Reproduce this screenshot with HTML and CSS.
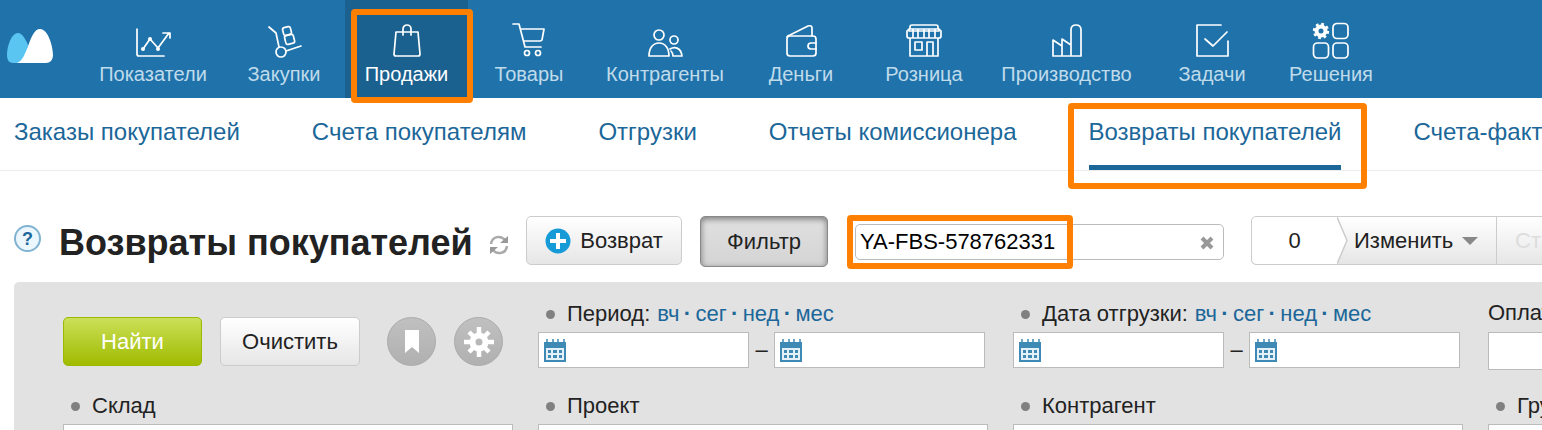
FILE: index.html
```html
<!DOCTYPE html>
<html lang="ru">
<head>
<meta charset="utf-8">
<title>Возвраты покупателей</title>
<link rel="stylesheet" href="styles.css">
</head>
<body>
<svg class="sprite" aria-hidden="true">
  <symbol id="calendar" viewBox="0 0 22 23">
    <path fill="#3f89b5" d="M0 3h22v20H0z"/>
    <path fill="#6da5c7" d="M2 0h2v3H2zM8 0h2v3H8zM13 0h2v3h-2zM19 0h2v3h-2z"/>
    <path fill="#e4f1f9" d="M2 9h18v12H2z"/>
    <path fill="#3f89b5" d="M4 11h3v3H4zM9 11h4v3H9zM15 11h3v3h-3zM4 16h3v3H4zM9 16h4v3H9zM15 16h3v3h-3z"/>
  </symbol>
</svg>

<header class="topbar">
  <a class="logo" href="#" aria-label="Главная">
    <svg width="46" height="34" viewBox="0 0 46 34"><path fill="#5bc5f2" d="M6 34C2 34 0 31 0 26C0 16 5 4 11 4C15 4 18 9 21 16L18 34z"/><path fill="#fff" d="M10 34C21 31 22 0 33 0C41 0 46 17 46 26C46 31 43 34 39 34z"/></svg>
  </a>
  <nav class="mainnav">
    <a class="nav-item" href="#"><svg class="nav-icon" viewBox="0 0 36 36"><path d="M2 6v25q0 2 2 2h25M8 26l7-10 8 9L34 10M28 10h7v5"/><circle class="solid" cx="8" cy="26" r="2"/><circle class="solid" cx="15" cy="16" r="2"/><circle class="solid" cx="23" cy="26" r="2"/></svg><span>Показатели</span></a>
    <a class="nav-item" href="#"><svg class="nav-icon" viewBox="0 0 36 36"><path d="M3 4l7 6 3 14M20 28l15-5"/><circle cx="15" cy="29" r="5"/><rect x="17" y="4" width="8" height="8" rx="2" transform="rotate(-14 21 8)"/><rect x="19" y="12" width="9" height="9" rx="2" transform="rotate(-14 23 16)"/></svg><span>Закупки</span></a>
    <a class="nav-item active" href="#"><svg class="nav-icon" viewBox="0 0 36 36"><path d="M7 9h22l2 22q0 2-2 2H7q-2 0-2-2zM14 12V6a4 4 0 0 1 8 0v6"/></svg><span>Продажи</span><i class="mark mark-nav"></i></a>
    <a class="nav-item" href="#"><svg class="nav-icon" viewBox="0 0 36 36"><path d="M2 1h6l6 23h16M10 6h23l-2 11q-1 1-2 1H13"/><circle cx="16" cy="30" r="2.5"/><circle cx="27" cy="30" r="2.5"/></svg><span>Товары</span></a>
    <a class="nav-item" href="#"><svg class="nav-icon" viewBox="0 0 36 36"><circle cx="12" cy="12" r="5"/><circle cx="27" cy="17" r="4"/><path d="M2 33c0-8 4-13 10-13s10 5 10 13zM23 26c5-3 11-1 12 7h-9q0-3-2-5"/></svg><span>Контрагенты</span></a>
    <a class="nav-item" href="#"><svg class="nav-icon" viewBox="0 0 36 36"><rect x="4" y="13" width="29" height="20" rx="3"/><path d="M4 14q0-1 3-2l18-9q4-1 4 2v8M33 20h-5q-3 0-3 3t3 3h5"/></svg><span>Деньги</span></a>
    <a class="nav-item" href="#"><svg class="nav-icon" viewBox="0 0 36 36"><path d="M3 6h30v2H3zM4 6V4q0-2 2-2h24q2 0 2 2v2M3 6l-2 2v5q0 2 2 2h30q2 0 2-2V8l-2-2M4 15v18h28V15M7 6v9M12 6v9M18 6v9M23 6v9M29 6v9M9 19h7v8H9zM21 33V19h6v14"/></svg><span>Розница</span></a>
    <a class="nav-item" href="#"><svg class="nav-icon" viewBox="0 0 36 36"><path d="M4 33V17l9 6v10M13 23v-7l9 6v11M22 22V7q0-5 5-5t5 5v26H4"/></svg><span>Производство</span></a>
    <a class="nav-item" href="#"><svg class="nav-icon" viewBox="0 0 36 36"><path d="M27 2H3v31h31V18M11 16l8 7L33 9"/></svg><span>Задачи</span></a>
    <a class="nav-item" href="#"><svg class="nav-icon" viewBox="0 0 36 36"><g stroke-linecap="butt"><circle cx="8" cy="8" r="4.5" stroke-width="4"/><circle cx="8" cy="8" r="7" stroke-width="2.4" stroke-dasharray="2.75 2.75"/></g><rect x="20" y="0.5" width="15" height="15" rx="4"/><rect x="0.5" y="20" width="15" height="15" rx="4"/><rect x="20" y="20" width="15" height="15" rx="4"/></svg><span>Решения</span></a>
  </nav>
</header>

<nav class="tabs">
  <a class="tab" href="#">Заказы покупателей</a>
  <a class="tab" href="#">Счета покупателям</a>
  <a class="tab" href="#">Отгрузки</a>
  <a class="tab" href="#">Отчеты комиссионера</a>
  <a class="tab current" href="#">Возвраты покупателей<i class="mark mark-tab"></i></a>
  <a class="tab" href="#">Счета-фактуры</a>
</nav>

<main>
  <div class="toolbar">
    <button class="help" type="button">?</button>
    <h1>Возвраты покупателей</h1>
    <button class="refresh" type="button" aria-label="Обновить"><svg width="20" height="20" viewBox="0 0 20 20" fill="none" stroke="#aaa" stroke-width="2.5"><path d="M2 9C3 1 12 0 16 5M18 11C17 19 8 20 4 15"/><path fill="#999" stroke="none" d="M19 1v7h-8zM1 19v-7h8z"/></svg></button>
    <button class="btn create" type="button"><svg width="26" height="26" viewBox="0 0 26 26"><circle cx="13" cy="13" r="12.5" fill="#179bd7"/><path d="M13 5v16M5 13h16" stroke="#fff" stroke-width="4"/></svg>Возврат</button>
    <button class="btn filter" type="button">Фильтр</button>
    <div class="search">
      <input type="text" aria-label="Поиск" value="YA-FBS-578762331">
      <button class="clear" type="button" aria-label="Очистить поиск"><svg width="14" height="14" viewBox="0 0 14 14"><path d="M2 2l10 10M12 2L2 12" stroke="#999" stroke-width="4"/></svg></button>
      <i class="mark mark-search"></i>
    </div>
    <div class="actions">
      <span class="count">0</span>
      <svg class="arrow" width="12" height="47" viewBox="0 0 12 47" preserveAspectRatio="none"><path d="M0 0l10 23.5L0 47z" fill="#fff"/><path d="M0 0l10 23.5L0 47" fill="none" stroke="#ccc" stroke-width="1.5"/></svg>
      <button class="change" type="button">Изменить<svg width="16" height="8" viewBox="0 0 16 8"><path d="M0 0h16L8 8z" fill="#888"/></svg></button>
      <button class="status" type="button" disabled>Статус</button>
    </div>
  </div>

  <form class="panel">
    <div class="buttons">
      <button class="btn find" type="button">Найти</button>
      <button class="btn reset" type="button">Очистить</button>
      <button class="round" type="button" aria-label="Закладка"><svg width="14" height="23" viewBox="0 0 14 23"><path fill="#fff" d="M0 0h14v23l-7-6-7 6z"/></svg></button>
      <button class="round" type="button" aria-label="Настройки"><svg width="30" height="30" viewBox="0 0 30 30" fill="none" stroke="#fff"><circle cx="15" cy="15" r="6.5" stroke-width="6"/><path stroke-width="4.5" d="M15 0v6M15 24v6M0 15h6M24 15h6M5 5l5 5M20 20l5 5M25 5l-5 5M10 20l-5 5"/></svg></button>
    </div>
    <div class="field">
      <div class="label"><i class="dot"></i><label for="p1">Период:</label><span class="quick"><a href="#">вч</a><b>·</b><a href="#">сег</a><b>·</b><a href="#">нед</a><b>·</b><a href="#">мес</a></span></div>
      <div class="range">
        <span class="date"><svg width="22" height="23"><use href="#calendar"/></svg><input id="p1" type="text"></span>
        <span class="dash">–</span>
        <span class="date"><svg width="22" height="23"><use href="#calendar"/></svg><input type="text" aria-label="Период, по"></span>
      </div>
    </div>
    <div class="field">
      <div class="label"><i class="dot"></i><label for="d1">Дата отгрузки:</label><span class="quick"><a href="#">вч</a><b>·</b><a href="#">сег</a><b>·</b><a href="#">нед</a><b>·</b><a href="#">мес</a></span></div>
      <div class="range">
        <span class="date"><svg width="22" height="23"><use href="#calendar"/></svg><input id="d1" type="text"></span>
        <span class="dash">–</span>
        <span class="date"><svg width="22" height="23"><use href="#calendar"/></svg><input type="text" aria-label="Дата отгрузки, по"></span>
      </div>
    </div>
    <div class="field">
      <div class="label plain"><label for="pay">Оплата</label></div>
      <input class="box" id="pay" type="text">
    </div>
    <div class="field"><div class="label"><i class="dot"></i><label for="store">Склад</label></div><input class="box" id="store" type="text"></div>
    <div class="field"><div class="label"><i class="dot"></i><label for="project">Проект</label></div><input class="box" id="project" type="text"></div>
    <div class="field"><div class="label"><i class="dot"></i><label for="agent">Контрагент</label></div><input class="box" id="agent" type="text"></div>
    <div class="field"><div class="label"><i class="dot"></i><label for="group">Группа</label></div><input class="box" id="group" type="text"></div>
  </form>
</main>
</body>
</html>
```
FILE: styles.css
```css
* { box-sizing: border-box; }
html { overflow: hidden; }
body {
  margin: 0;
  overflow: hidden;
  background: #fff;
  color: #222;
  font: 22px/26px "Liberation Sans", Arial, sans-serif;
}
a { color: #1c6799; text-decoration: none; }
button, input { font: inherit; color: inherit; margin: 0; }
button { padding: 0; border: 0; background: none; white-space: nowrap; }
svg { display: block; flex: none; }
.sprite { position: absolute; width: 0; height: 0; }

/* top navigation */
.topbar { display: flex; height: 98px; background: #1f73aa; }
.logo { padding: 29px 30px 0 7px; }
.mainnav {
  display: grid;
  grid-template-columns: 140px 122px 123px 122px 150px 122px 124px 161px 130px 108px;
}
.nav-item {
  position: relative;
  display: flex;
  flex-direction: column;
  align-items: center;
  gap: 3px;
  padding-top: 23px;
  color: #c0dbeb;
  font-size: 20px;
  line-height: 24px;
  white-space: nowrap;
}
.nav-item.active { background: #1b618f; color: #fff; }
.nav-icon {
  width: 36px;
  height: 36px;
  overflow: visible;
  fill: none;
  stroke: #fff;
  stroke-width: 1.7;
  stroke-linejoin: round;
  stroke-linecap: round;
}
.nav-icon .solid { fill: #fff; stroke: none; }

/* highlight frames */
.mark {
  position: absolute;
  z-index: 2;
  border: 6px solid #ff8000;
  border-radius: 4px;
  pointer-events: none;
}
.mark-nav { top: 9px; right: -5px; bottom: -5px; left: 6px; }
.mark-tab { top: 5px; right: -26px; bottom: -24px; left: -21px; }
.mark-search { top: -9px; bottom: -9px; left: -8px; width: 226px; }

/* section tabs */
.tabs {
  display: flex;
  gap: 72px;
  height: 73px;
  padding-left: 14px;
  border-bottom: 1px solid #ececec;
  font-size: 24px;
}
.tab { position: relative; flex: none; padding-top: 21px; }
.tab.current { border-bottom: 5px solid #1c6799; }

/* toolbar */
.toolbar { display: flex; height: 111px; padding: 45px 0 0 14px; }
.toolbar > * { flex: none; }
.help {
  width: 27px;
  height: 27px;
  margin-top: 9px;
  border: 2px solid #7fb3d1;
  border-radius: 50%;
  background: #ecf7fd;
  color: #1c6799;
  font-size: 18px;
  font-weight: bold;
  line-height: 22px;
}
h1 { width: 430px; margin: 5px 0 0 18px; font-size: 36px; line-height: 44px; white-space: nowrap; }
.refresh { align-self: flex-start; margin-top: 19px; }
.btn {
  height: 49px;
  border: 1px solid #ccc;
  border-radius: 5px;
  background: linear-gradient(#fff, #e6e6e6);
}
.create { display: flex; align-items: center; justify-content: center; gap: 9px; width: 156px; margin-left: 17px; }
.filter {
  width: 128px;
  height: 51px;
  margin-left: 18px;
  border-color: #888;
  background: linear-gradient(#e0e0e0, #d4d4d4);
  box-shadow: inset 0 2px 6px #777;
}
.search { position: relative; display: flex; width: 369px; height: 36px; margin: 8px 27px 0; }
.search input {
  width: 100%;
  padding: 0 36px 1px 4px;
  border: 1px solid #bbb;
  border-radius: 5px;
  color: #000;
}
.clear { position: absolute; top: 12px; right: 10px; }
.actions {
  display: flex;
  height: 49px;
  border: 1px solid #ccc;
  border-radius: 5px;
  background: linear-gradient(#fff, #e6e6e6);
  line-height: 47px;
}
.count { width: 85px; border-radius: 5px 0 0 5px; background: #fff; text-align: center; }
.change { display: flex; align-items: center; gap: 9px; width: 147px; padding-left: 5px; }
.status { padding: 0 18px; border-left: 1px solid #ccc; color: #ddd; }

/* filter panel */
.panel {
  display: grid;
  grid-template-columns: repeat(4, 450px);
  column-gap: 25px;
  row-gap: 24px;
  margin-left: 14px;
  padding: 20px 49px 40px;
  border-radius: 5px 0 0;
  background: #e2e2e2;
}
.buttons { display: flex; gap: 18px; padding-top: 15px; }
.find { width: 139px; border-color: #9cb800; background: linear-gradient(#cbe058, #a0bb00); color: #fff; }
.reset { width: 140px; margin-right: 9px; }
.round {
  display: grid;
  place-items: center;
  width: 49px;
  height: 49px;
  border: 1px solid #aaa;
  border-radius: 50%;
  background: linear-gradient(#c0c0c0, #b0b0b0);
}
.label { display: flex; align-items: center; height: 30px; padding: 0 0 6px 8px; white-space: nowrap; }
.label.plain { padding: 0 0 8px; }
.dot { width: 9px; height: 9px; margin-right: 12px; border-radius: 50%; background: #808080; }
.quick { display: flex; margin-left: 7px; color: #1c6799; }
.quick b { width: 16px; text-align: center; }
.range { display: flex; width: 447px; }
.date {
  display: flex;
  align-items: center;
  flex: 1;
  height: 36px;
  padding-left: 5px;
  border: 1px solid #bbb;
  background: #fff;
}
.date input { min-width: 0; width: 100%; border: 0; background: none; }
.dash { width: 25px; line-height: 36px; text-align: center; }
.box { display: block; width: 100%; height: 38px; border: 1px solid #bbb; background: #fff; }
```
